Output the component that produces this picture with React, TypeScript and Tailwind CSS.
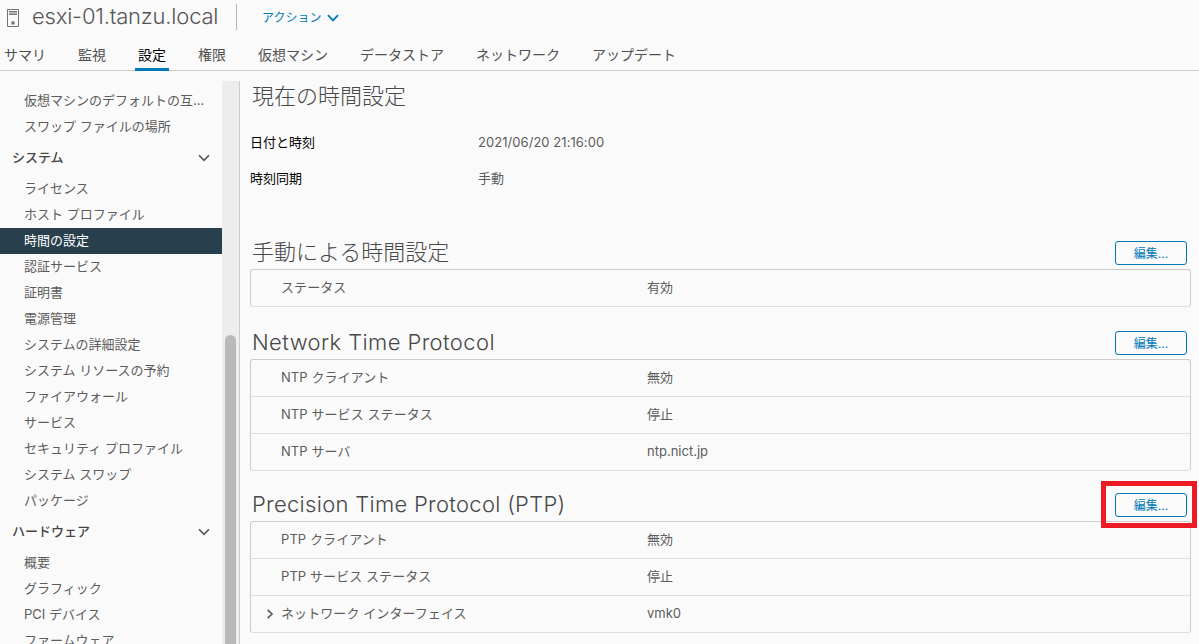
import React from "react";

const tabs = [
  { label: "サマリ", width: "w-[42px]" },
  { label: "監視", width: "w-[28px]" },
  { label: "設定", width: "w-[28px]", active: true },
  { label: "権限", width: "w-[28px]" },
  { label: "仮想マシン", width: "w-[70px]" },
  { label: "データストア", width: "w-[84px]" },
  { label: "ネットワーク", width: "w-[84px]" },
  { label: "アップデート", width: "w-[84px]" },
];

const systemItems = [
  "ライセンス",
  "ホスト プロファイル",
  "時間の設定",
  "認証サービス",
  "証明書",
  "電源管理",
  "システムの詳細設定",
  "システム リソースの予約",
  "ファイアウォール",
  "サービス",
  "セキュリティ プロファイル",
  "システム スワップ",
  "パッケージ",
];

const hardwareItems = ["概要", "グラフィック", "PCI デバイス", "ファームウェア"];

function Chevron({ className, weight = 1.6 }: { className?: string; weight?: number }) {
  return (
    <svg viewBox="0 0 12 8" fill="none" stroke="currentColor" strokeWidth={weight} className={className}>
      <path d="M1 1.2 6 6.4 11 1.2" />
    </svg>
  );
}

function HostIcon() {
  return (
    <svg width="12" height="18" viewBox="0 0 12 18" className="mt-0.5 shrink-0 text-[#737373]">
      <path d="M.5.5h11v17H.5z" fill="#fafafa" stroke="currentColor" />
      <path d="M2 2.5h8M2 5.5h8" stroke="currentColor" />
      <path d="M2 4h8" stroke="#b5b5b5" strokeWidth="2" />
      <circle cx="6" cy="14" r="1.8" fill="currentColor" />
    </svg>
  );
}

function NavItem({ label }: { label: string }) {
  const active = label === "時間の設定";
  return (
    <li
      className={
        active
          ? "h-[26px] bg-[#28404d] pl-6 leading-[25px] text-white"
          : "h-[26px] truncate pr-3.5 pl-6 leading-[25px]"
      }
    >
      {label}
    </li>
  );
}

function NavGroup({ title, items }: { title: string; items: string[] }) {
  return (
    <section>
      <h2 className="flex h-9 items-center justify-between pr-3 pb-px pl-3 font-medium text-[#454545]">
        {title}
        <Chevron className="h-2 w-3 text-[#565656]" />
      </h2>
      <ul>
        {items.map((item) => (
          <NavItem key={item} label={item} />
        ))}
      </ul>
    </section>
  );
}

function EditButton({ highlighted }: { highlighted?: boolean }) {
  return (
    <div className="relative">
      <button className="flex h-6 w-[72px] items-center justify-center rounded-[3px] border border-[#0079b8] pt-0.5 text-xs leading-none text-[#0079b8]">
        編集...
      </button>
      {highlighted && (
        <span className="pointer-events-none absolute -top-3 -left-3.5 h-[47px] w-24 border-[5px] border-[#ed1c24]" />
      )}
    </div>
  );
}

type Row = { label: string; value: string; expandable?: boolean };

function SettingsBlock({
  title,
  titleClass,
  headerClass,
  rows,
  highlighted,
}: {
  title: string;
  titleClass: string;
  headerClass: string;
  rows: Row[];
  highlighted?: boolean;
}) {
  return (
    <section>
      <header className={`flex items-end justify-between pr-1 pb-1 pl-0.5 ${headerClass}`}>
        <h2 className={`text-[22px] leading-[26px] font-light whitespace-nowrap text-[#484848] ${titleClass}`}>
          {title}
        </h2>
        <EditButton highlighted={highlighted} />
      </header>
      <div className="rounded-[3px] border border-[#ccc] border-b-[#ddd]">
        {rows.map((row, i) => (
          <div
            key={row.label}
            className={`flex items-center pb-px ${i > 0 ? "h-[37px] border-t border-[#ddd]" : "h-9"}`}
          >
            <div className="flex w-[30px] justify-center pl-2">
              {row.expandable && <Chevron className="h-2 w-2.5 -rotate-90" weight={2} />}
            </div>
            <div className="w-[366px] tracking-[0.08px]">{row.label}</div>
            <div>{row.value}</div>
          </div>
        ))}
      </div>
    </section>
  );
}

export default function App() {
  return (
    <div className="flex h-[644px] w-[1199px] flex-col overflow-hidden bg-[#fafafa] font-['Inter','Noto_Sans_CJK_JP',sans-serif] text-[13px] text-[#5c5c5c]">
      <header className="flex h-[71px] shrink-0 flex-col border-b border-[#ccc]">
        <div className="flex h-[34px] items-center pl-[7px]">
          <HostIcon />
          <h1 className="ml-[13px] w-[204px] pb-0.5 text-[22px] leading-8 font-light tracking-[-0.2px] whitespace-nowrap text-[#565656]">
            esxi-01.tanzu.local
          </h1>
          <span className="h-[26px] w-px bg-[#b5b5b5]" />
          <button className="ml-[25px] flex items-center gap-1.5 pt-px text-xs text-[#0079b8]">
            アクション
            <Chevron className="h-2 w-3" weight={1.7} />
          </button>
        </div>
        <nav className="flex h-[37px] gap-8 pl-1 text-sm text-[#505050]">
          {tabs.map((tab) => (
            <div
              key={tab.label}
              className={
                tab.active
                  ? "-mx-[3px] flex h-[37px] shrink-0 items-center justify-center border-b-[3px] border-[#0079b8] px-[3px] pt-2 text-black"
                  : `flex h-[37px] shrink-0 items-center pt-[5px] whitespace-nowrap ${tab.width}`
              }
            >
              {tab.label}
            </div>
          ))}
        </nav>
      </header>

      <div className="flex min-h-0 flex-1 pt-2.5">
        <aside className="flex w-60 shrink-0 border-r border-[#ccc]">
          <nav className="w-[222px] pt-[7px]">
            <ul>
              <NavItem label="仮想マシンのデフォルトの互換性" />
              <NavItem label="スワップ ファイルの場所" />
            </ul>
            <NavGroup title="システム" items={systemItems} />
            <NavGroup title="ハードウェア" items={hardwareItems} />
          </nav>
          <div className="flex flex-1 justify-center bg-[#ededed] pt-[254px]">
            <div className="h-[330px] w-[11px] rounded-t-full bg-[#b9b9b9]" />
          </div>
        </aside>

        <main className="w-[951px] pl-2.5">
          <h2 className="pl-0.5 text-[22px] leading-[30px] font-light text-[#484848]">現在の時間設定</h2>
          <dl className="pt-3.5 pb-px">
            <div className="flex h-9 items-center">
              <dt className="w-[228px] text-black">日付と時刻</dt>
              <dd className="tracking-[0.05px]">2021/06/20 21:16:00</dd>
            </div>
            <div className="flex h-9 items-center">
              <dt className="w-[228px] text-black">時刻同期</dt>
              <dd>手動</dd>
            </div>
          </dl>
          <SettingsBlock
            title="手動による時間設定"
            titleClass=""
            headerClass="h-[71px]"
            rows={[{ label: "ステータス", value: "有効" }]}
          />
          <SettingsBlock
            title="Network Time Protocol"
            titleClass="tracking-[0.4px]"
            headerClass="h-[52px]"
            rows={[
              { label: "NTP クライアント", value: "無効" },
              { label: "NTP サービス ステータス", value: "停止" },
              { label: "NTP サーバ", value: "ntp.nict.jp" },
            ]}
          />
          <SettingsBlock
            title="Precision Time Protocol (PTP)"
            titleClass="tracking-[0.3px]"
            headerClass="h-[50px]"
            highlighted
            rows={[
              { label: "PTP クライアント", value: "無効" },
              { label: "PTP サービス ステータス", value: "停止" },
              { label: "ネットワーク インターフェイス", value: "vmk0", expandable: true },
            ]}
          />
        </main>
      </div>
    </div>
  );
}
